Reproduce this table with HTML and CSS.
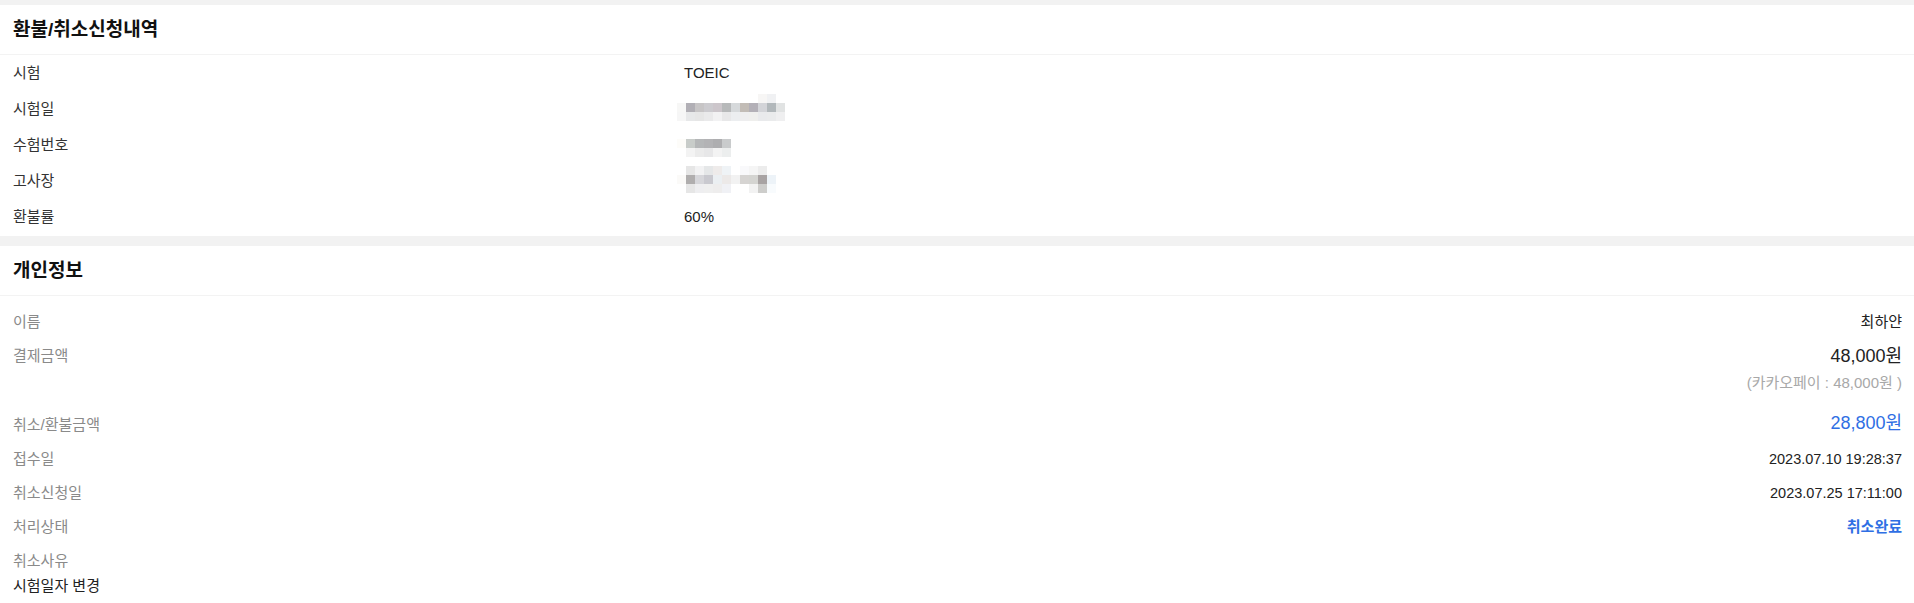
FILE: index.html
```html
<!DOCTYPE html>
<html lang="ko">
<head>
<meta charset="UTF-8">
<meta name="viewport" content="width=device-width, initial-scale=1.0">
<title>환불/취소신청내역</title>
<link rel="stylesheet" href="styles.css">
</head>
<body>

<div class="section first">
  <h2 class="section-title">환불/취소신청내역</h2>
  <div class="info-table">
    <div class="info-row">
      <span class="info-label">시험</span>
      <span class="info-value">TOEIC</span>
    </div>
    <div class="info-row">
      <span class="info-label">시험일</span>
      <div class="mosaic">
        <i></i><i></i><i></i><i></i><i></i><i></i><i></i><i></i><i></i><i style="background:#f7f6f5"></i><i style="background:#f0f1f3"></i><i></i>
        <i style="background:#f7f7f6"></i><i style="background:#b1afb5"></i><i style="background:#c7c5c6"></i><i style="background:#cccbcf"></i><i style="background:#ccc6cb"></i><i style="background:#b7b9ba"></i><i style="background:#d6d9db"></i><i style="background:#c2bcb6"></i><i style="background:#b3b0b7"></i><i style="background:#d3d4d8"></i><i style="background:#b2b8bb"></i><i style="background:#e1e3e3"></i>
        <i style="background:#f6f6f6"></i><i style="background:#e7e8e9"></i><i style="background:#e6e6e6"></i><i style="background:#eaeaeb"></i><i style="background:#f2f2f3"></i><i style="background:#e8e8e9"></i><i style="background:#eceef0"></i><i style="background:#eeeeef"></i><i style="background:#efefed"></i><i style="background:#e9eaec"></i><i style="background:#eaebec"></i><i style="background:#efeff0"></i>
      </div>
    </div>
    <div class="info-row">
      <span class="info-label">수험번호</span>
      <div class="mosaic">
        <i></i><i></i><i></i><i></i><i></i><i></i><i></i><i></i><i></i><i></i><i></i><i></i>
        <i style="background:#fdfcf9"></i><i style="background:#c8ccc9"></i><i style="background:#b5b7b8"></i><i style="background:#b3b3b5"></i><i style="background:#aeaeb0"></i><i style="background:#c9cbcc"></i><i></i><i></i><i></i><i></i><i></i><i></i>
        <i></i><i style="background:#f3f3f3"></i><i style="background:#ebebeb"></i><i style="background:#e7e7e8"></i><i style="background:#f3f3f3"></i><i style="background:#eceeee"></i><i></i><i></i><i></i><i></i><i></i><i></i>
      </div>
    </div>
    <div class="info-row">
      <span class="info-label">고사장</span>
      <div class="mosaic">
        <i></i><i style="background:#e6e6e6"></i><i style="background:#f2f2f3"></i><i style="background:#e5e7e8"></i><i style="background:#eeebea"></i><i style="background:#eff3f6"></i><i></i><i style="background:#f9f9fb"></i><i style="background:#f5f5f5"></i><i style="background:#ececec"></i><i></i><i></i>
        <i style="background:#fbfaf8"></i><i style="background:#b0aeae"></i><i style="background:#d6d6da"></i><i style="background:#c9c9cf"></i><i style="background:#ebeff2"></i><i style="background:#ece9e8"></i><i style="background:#f2f2f2"></i><i style="background:#d6d4d2"></i><i style="background:#d4d4d1"></i><i style="background:#a8a3a3"></i><i style="background:#edf3f8"></i><i></i>
        <i></i><i style="background:#e6e6e6"></i><i style="background:#eeeef0"></i><i style="background:#efefef"></i><i style="background:#eeeded"></i><i style="background:#f0f1f5"></i><i></i><i></i><i style="background:#f2f2f2"></i><i style="background:#cdcdcb"></i><i style="background:#f8fbfd"></i><i></i>
      </div>
    </div>
    <div class="info-row">
      <span class="info-label">환불률</span>
      <span class="info-value">60%</span>
    </div>
  </div>
</div>

<div class="section">
  <h2 class="section-title">개인정보</h2>
  <div class="detail-list">
    <div class="detail-row">
      <span class="detail-label">이름</span>
      <span class="detail-value">최하얀</span>
    </div>
    <div class="detail-row">
      <span class="detail-label">결제금액</span>
      <div class="detail-value">
        <div class="price">48,000원</div>
        <div class="price-sub">(카카오페이 : 48,000원 )</div>
      </div>
    </div>
    <div class="detail-row">
      <span class="detail-label">취소/환불금액</span>
      <span class="detail-value price blue refund">28,800원</span>
    </div>
    <div class="detail-row">
      <span class="detail-label">접수일</span>
      <span class="detail-value date">2023.07.10 19:28:37</span>
    </div>
    <div class="detail-row">
      <span class="detail-label">취소신청일</span>
      <span class="detail-value date">2023.07.25 17:11:00</span>
    </div>
    <div class="detail-row">
      <span class="detail-label">처리상태</span>
      <span class="detail-value status">취소완료</span>
    </div>
    <div class="detail-reason">
      <span class="detail-label">취소사유</span>
      <p class="reason-text">시험일자 변경</p>
    </div>
  </div>
</div>

</body>
</html>
```

FILE: styles.css
```css
body, html {
  margin: 0;
  padding: 0;
  background-color: #f2f2f2;
  font-family: "Liberation Sans", "Noto Sans CJK KR", sans-serif;
  color: #222;
}
.section {
  background-color: #fff;
  margin-top: 10px;
}
.section.first {
  margin-top: 5px;
}
.section-title {
  margin: 0;
  padding: 13px 13px 12px;
  font-size: 19px;
  line-height: 24px;
  font-weight: bold;
  color: #111;
  border-bottom: 1px solid #f3f3f3;
}

/* 시험 정보 */
.info-table {
  padding-bottom: 1px;
}
.info-row {
  display: grid;
  grid-template-columns: 671px 1fr;
  padding: 8px 12px 8px 13px;
  font-size: 15px;
  line-height: 20px;
}
.info-label {
  color: #333;
}
.info-value {
  color: #222;
}
.mosaic {
  display: grid;
  grid-template-columns: repeat(12, 9px);
  grid-auto-rows: 9px;
  margin: -5px 0 -2px -7px;
}
.mosaic i {
  display: block;
  background: #fff;
}

/* 개인정보 */
.detail-list {
  padding: 9px 0 9px;
}
.detail-row, .detail-reason {
  display: flex;
  justify-content: space-between;
  align-items: flex-start;
  padding: 7px 12px 7px 13px;
  font-size: 15px;
  line-height: 20px;
}
.detail-reason {
  display: block;
  padding-bottom: 0;
}
.detail-label {
  color: #8a8a8a;
}
.detail-value {
  text-align: right;
  color: #222;
}
.price {
  font-size: 18px;
  line-height: 20px;
}
.price-sub {
  margin: 7px 0 8px;
  font-size: 15px;
  line-height: 20px;
  color: #a8a8a8;
}
.refund {
  margin-top: -2px;
}
.blue {
  color: #2f6fe4;
}
.date {
  font-size: 14.5px;
}
.status {
  color: #2f6fe4;
  font-weight: bold;
}
.reason-text {
  margin: 5px 0 0;
  color: #222;
}
```
